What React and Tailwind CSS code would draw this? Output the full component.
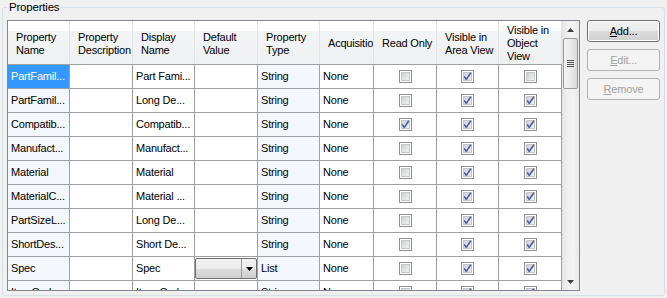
import React from 'react'

const widths = [62, 63, 62, 63, 62, 54, 63, 62, 63]

const headers = [
  ['Property', 'Name'],
  ['Property', 'Description'],
  ['Display', 'Name'],
  ['Default', 'Value'],
  ['Property', 'Type'],
  ['Acquisitio'],
  ['Read Only'],
  ['Visible in', 'Area View'],
  ['Visible in', 'Object', 'View'],
]

const rows = [
  ['PartFamil...', '', 'Part Fami...', '', 'String', 'None', 0, 1, 0],
  ['PartFamil...', '', 'Long De...', '', 'String', 'None', 0, 1, 1],
  ['Compatib...', '', 'Compatib...', '', 'String', 'None', 1, 1, 1],
  ['Manufact...', '', 'Manufact...', '', 'String', 'None', 0, 1, 1],
  ['Material', '', 'Material', '', 'String', 'None', 0, 1, 1],
  ['MaterialC...', '', 'Material ...', '', 'String', 'None', 0, 1, 1],
  ['PartSizeL...', '', 'Long De...', '', 'String', 'None', 0, 1, 1],
  ['ShortDes...', '', 'Short De...', '', 'String', 'None', 0, 1, 1],
  ['Spec', '', 'Spec', 'combo', 'List', 'None', 0, 1, 1],
  ['ItemCode...', '', 'Item Code...', '', 'String', 'None', 0, 1, 1],
]

function Check({ on }) {
  return (
    <svg width="13" height="13" viewBox="0 0 13 13" className="block">
      <defs>
        <linearGradient id="cbg" x1="0" y1="0" x2="1" y2="1">
          <stop offset="0" stopColor="#c9ccd1" />
          <stop offset="1" stopColor="#f7f7f7" />
        </linearGradient>
      </defs>
      <rect x="0.5" y="0.5" width="12" height="12" fill="#fff" stroke="#8e8f8f" />
      <rect x="2.5" y="2.5" width="8" height="8" fill="url(#cbg)" stroke="#c4c7cc" strokeWidth="1" />
      {on ? (
        <path d="M3.2 6.6 L5.4 9.4 L9.8 2.8" fill="none" stroke="#4a5f9c" strokeWidth="1.6" strokeLinejoin="round" />
      ) : null}
    </svg>
  )
}

function Combo() {
  return (
    <div className="flex h-[21px] w-full border border-[#707070] rounded-[2px] bg-[linear-gradient(180deg,#f2f2f2_0%,#ebebeb_50%,#dddddd_51%,#cfcfcf_100%)]">
      <div className="flex-1" />
      <div className="w-[15px] border-l border-[#9a9a9a] flex items-center justify-center">
        <svg width="7" height="4" viewBox="0 0 7 4"><path d="M0 0 H7 L3.5 4 Z" fill="#000" /></svg>
      </div>
    </div>
  )
}

function Cell({ w, value, col, selected }) {
  const readOnly = col === 0 || col === 4
  let bg = readOnly ? 'bg-[#f4f7fc]' : 'bg-white'
  if (selected) bg = 'bg-[#3399ff] text-white'
  let inner
  if (col >= 6) {
    inner = (
      <div className="flex h-full items-center justify-center">
        <Check on={value === 1} />
      </div>
    )
  } else if (value === 'combo') {
    inner = <div className="flex h-full items-center">
      <Combo />
    </div>
  } else {
    inner = <div className="flex h-full items-center pl-[3px] whitespace-nowrap overflow-hidden">{value}</div>
  }
  return (
    <div style={{ width: w }} className={`shrink-0 h-[24px] border-r border-b border-[#a0a0a0] ${bg}`}>
      {inner}
    </div>
  )
}

function ScrollBar() {
  return (
    <div className="w-[17px] h-full flex flex-col bg-[linear-gradient(90deg,#e3e3e3_0%,#efefef_30%,#f3f3f3_70%,#e6e6e6_100%)]">
      <div className="h-[17px] flex items-center justify-center">
        <svg width="7" height="4" viewBox="0 0 7 4"><path d="M0 4 H7 L3.5 0 Z" fill="#3c3c3c" /></svg>
      </div>
      <div className="h-[51px] mx-[1px] rounded-[2px] border border-[#9a9a9a] bg-[linear-gradient(90deg,#f2f2f2_0%,#ebebeb_50%,#d9d9d9_100%)] flex flex-col items-center justify-center gap-[1px]">
        <div className="w-[7px] h-[1px] bg-[#555]" />
        <div className="w-[7px] h-[1px] bg-[#555]" />
        <div className="w-[7px] h-[1px] bg-[#555]" />
        <div className="w-[7px] h-[1px] bg-[#555]" />
      </div>
      <div className="flex-1" />
      <div className="h-[17px] flex items-center justify-center">
        <svg width="7" height="4" viewBox="0 0 7 4"><path d="M0 0 H7 L3.5 4 Z" fill="#3c3c3c" /></svg>
      </div>
    </div>
  )
}

function WinButton({ label, mnemonic, enabled, isDefault }) {
  const rest = label.slice(1)
  return (
    <button
      type="button"
      className={`h-[22px] w-[73px] rounded-[3px] border flex items-center justify-center ${
        isDefault
          ? 'border-[#707070] text-black bg-[linear-gradient(180deg,#f2f2f2_0%,#ebebeb_50%,#dddddd_51%,#cfcfcf_100%)] shadow-[inset_0_0_0_1px_#fff]'
          : enabled
          ? 'border-[#707070] text-black bg-[#e5e5e5]'
          : 'border-[#adb2b5] text-[#a0a0a0] bg-[#f4f4f4]'
      }`}
    >
      <span>
        <span className="underline underline-offset-1">{mnemonic}</span>
        {rest}
      </span>
    </button>
  )
}

export default function App() {
  return (
    <div
      className="w-[667px] h-[298px] bg-[#f0f0f0] text-[11px] leading-[13px] tracking-[-0.2px] text-black overflow-hidden"
      style={{ fontFamily: '"Liberation Sans", Arial, sans-serif' }}
    >
      <fieldset className="ml-[2px] w-[663px] border border-[#d5dfe5] rounded-[3px] pl-[4px] pr-[4px] pt-[5px] pb-[4px]">
        <legend className="px-[2px] leading-[15px] text-[11.5px]">Properties</legend>
        <div className="flex gap-[7px]">
          <div className="w-[573px] h-[271px] border border-[#828790] flex bg-white">
            <div className="w-[554px] flex flex-col overflow-hidden">
              <div className="flex h-[44px] shrink-0 border-b border-[#a0a0a0] bg-[linear-gradient(180deg,#ffffff_0%,#ffffff_23%,#f3f4f6_24%,#eff0f2_100%)]">
                {headers.map((h, i) => (
                  <div
                    key={i}
                    style={{ width: widths[i] }}
                    className="shrink-0 h-full border-r border-[#e1e3e6] flex flex-col justify-center pl-[8px] pt-[2px] whitespace-nowrap overflow-hidden"
                  >
                    {h.map((t, j) => (
                      <div key={j}>{t}</div>
                    ))}
                  </div>
                ))}
              </div>
              {rows.map((r, ri) => (
                <div key={ri} className="flex shrink-0">
                  {r.map((v, ci) => (
                    <Cell key={ci} w={widths[ci]} value={v} col={ci} selected={ri === 0 && ci === 0} />
                  ))}
                </div>
              ))}
            </div>
            <ScrollBar />
          </div>
          <div className="flex flex-col gap-[7px]">
            <WinButton label="Add..." mnemonic="A" enabled isDefault />
            <WinButton label="Edit..." mnemonic="E" />
            <WinButton label="Remove" mnemonic="R" />
          </div>
        </div>
      </fieldset>
    </div>
  )
}
